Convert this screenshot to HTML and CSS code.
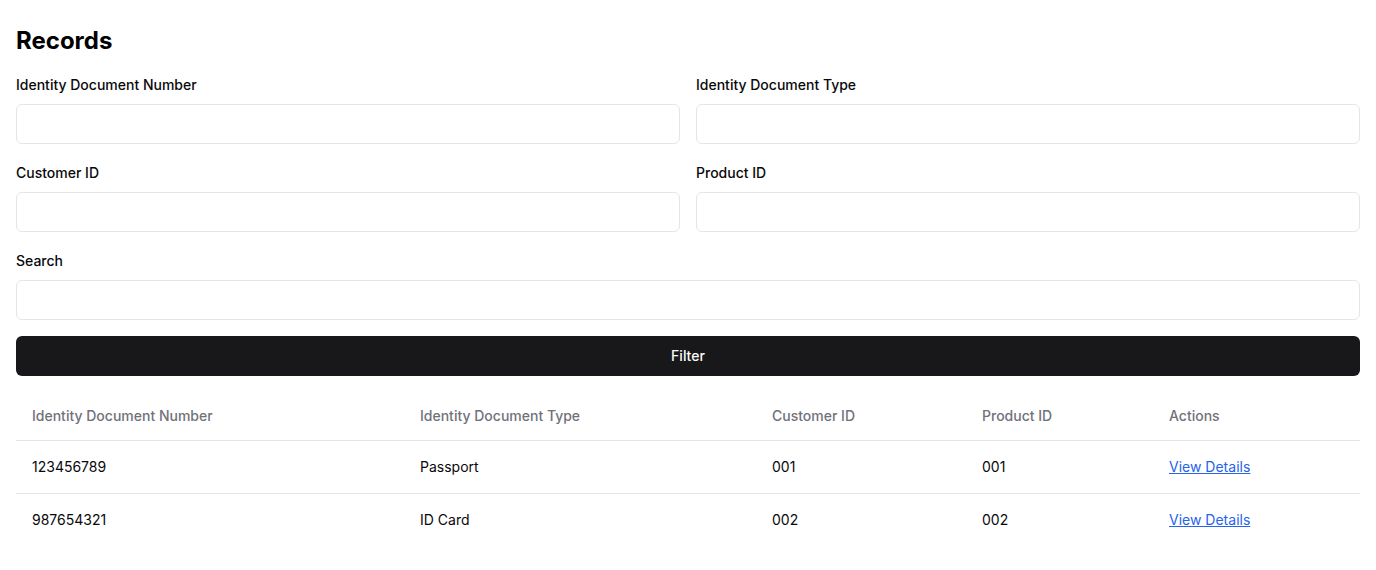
FILE: index.html
```html
<!DOCTYPE html>
<html>
<head>
<meta charset="utf-8">
<link rel="stylesheet" href="styles.css">
</head>
<body>
<div class="page">
  <h1 class="title">Records</h1>
  <div class="filters">
    <div class="field">
      <label class="label">Identity Document Number</label>
      <input class="input" type="text">
    </div>
    <div class="field">
      <label class="label">Identity Document Type</label>
      <input class="input" type="text">
    </div>
    <div class="field">
      <label class="label">Customer ID</label>
      <input class="input" type="text">
    </div>
    <div class="field">
      <label class="label">Product ID</label>
      <input class="input" type="text">
    </div>
    <div class="field wide">
      <label class="label">Search</label>
      <input class="input" type="text">
    </div>
  </div>
  <button class="btn">Filter</button>
  <table class="table">
    <thead>
      <tr>
        <th class="c1">Identity Document Number</th>
        <th class="c2">Identity Document Type</th>
        <th class="c3">Customer ID</th>
        <th class="c4">Product ID</th>
        <th class="c5">Actions</th>
      </tr>
    </thead>
    <tbody>
      <tr>
        <td>123456789</td>
        <td>Passport</td>
        <td>001</td>
        <td>001</td>
        <td><a class="link" href="#">View Details</a></td>
      </tr>
      <tr>
        <td>987654321</td>
        <td>ID Card</td>
        <td>002</td>
        <td>002</td>
        <td><a class="link" href="#">View Details</a></td>
      </tr>
    </tbody>
  </table>
</div>
</body>
</html>
```
FILE: styles.css
```css
* { box-sizing: border-box; }
html, body { margin: 0; padding: 0; background: #ffffff; }
body {
  font-family: Inter, "Noto Sans", sans-serif;
  font-size: 14px;
  line-height: 20px;
  color: #09090b;
}
.page { padding: 25px 16px 16px; }
.title {
  margin: 0 0 18px;
  font-size: 24px;
  line-height: 32px;
  font-weight: 700;
  color: #000;
}
.filters {
  display: grid;
  grid-template-columns: 1fr 1fr;
  column-gap: 16px;
  row-gap: 19px;
}
.field { display: flex; flex-direction: column; }
.field.wide { grid-column: 1 / span 2; }
.label {
  font-size: 14px;
  line-height: 20px;
  font-weight: 500;
  margin-bottom: 9px;
  color: #09090b;
}
.input {
  height: 40px;
  border: 1px solid #e4e4e7;
  border-radius: 6px;
  padding: 8px 12px;
  font: inherit;
  background: #fff;
  outline: none;
}
.btn {
  display: block;
  width: 100%;
  height: 40px;
  margin-top: 16px;
  border: none;
  border-radius: 6px;
  background: #18181b;
  color: #fafafa;
  font: inherit;
  font-weight: 500;
  cursor: pointer;
}
.table {
  width: 100%;
  margin-top: 16px;
  border-collapse: collapse;
  table-layout: fixed;
}
.table th {
  height: 48px;
  padding: 0 16px;
  text-align: left;
  font-weight: 500;
  color: #71717a;
  border-bottom: 1px solid #e4e4e7;
}
.table td {
  padding: 16px;
  border-bottom: 1px solid #e4e4e7;
}
.table tbody tr:last-child td { border-bottom: none; }
.c1 { width: 388px; }
.c2 { width: 352px; }
.c3 { width: 210px; }
.c4 { width: 187px; }
.c5 { width: 207px; }
.link { color: #2563eb; text-decoration: underline; }
```
